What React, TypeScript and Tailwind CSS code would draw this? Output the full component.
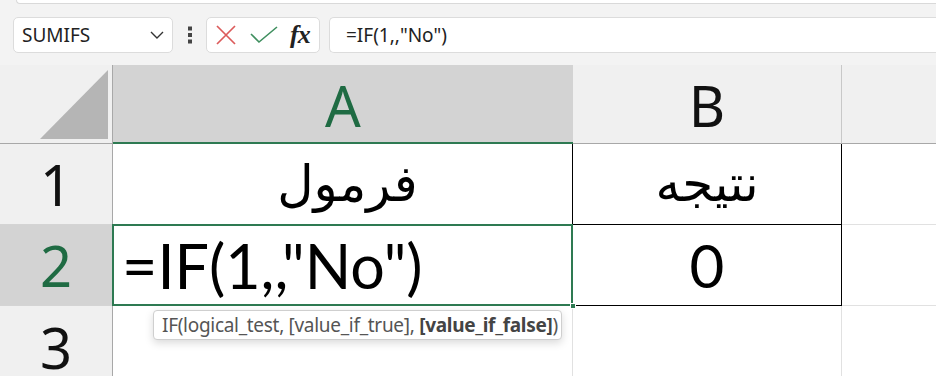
import React from "react";

export default function App() {
  return (
    <div className="w-[936px] h-[376px] bg-[#f3f3f3] overflow-hidden relative font-['Noto_Sans',sans-serif]">
      {/* top ribbon edge */}
      <div className="h-[4px] ml-[16px] bg-white border-b border-l border-[#d9d9d9] rounded-bl-[7px]" />

      {/* formula bar */}
      <div className="flex items-center h-[36px] mt-[13px]">
        <div className="ml-[13px] w-[160px] h-full bg-white border border-[#dcdcdc] rounded-[5px] flex items-center justify-between pl-[8px] pr-[7px]">
          <span className="text-[19px] text-[#222] leading-none">SUMIFS</span>
          <svg width="16" height="10" viewBox="0 0 16 10">
            <path d="M2 2 L8 8 L14 2" fill="none" stroke="#333" strokeWidth="1.4" />
          </svg>
        </div>
        <div className="w-[33px] flex justify-center">
          <svg width="6" height="18" viewBox="0 0 6 18">
            <rect x="1" y="0.5" width="4" height="4" fill="#444" />
            <rect x="1" y="7" width="4" height="4" fill="#444" />
            <rect x="1" y="13.5" width="4" height="4" fill="#444" />
          </svg>
        </div>
        <div className="w-[114px] h-full bg-white border border-[#dcdcdc] rounded-[5px] flex items-center pl-[8px]">
          <svg width="22" height="22" viewBox="0 0 22 22">
            <path d="M2 2 L20 20 M20 2 L2 20" stroke="#dc5b5b" strokeWidth="1.7" />
          </svg>
          <svg className="ml-[13px]" width="28" height="18" viewBox="0 0 28 18">
            <path d="M1 8 L9 16 L27 1" fill="none" stroke="#3f8f5f" strokeWidth="1.6" />
          </svg>
          <span className="ml-[12px] text-[26px] leading-none italic text-[#222] font-['Liberation_Serif',serif] font-bold tracking-[-1px]">
            fx
          </span>
        </div>
        <div className="ml-[9px] flex-1 h-full bg-white border border-r-0 border-[#dcdcdc] rounded-l-[5px] flex items-center pl-[16px]">
          <span className="text-[19px] text-[#222] leading-none">=IF(1,,"No")</span>
        </div>
      </div>

      {/* grid */}
      <div className="mt-[12px] grid grid-cols-[113px_460px_269px_1fr] grid-rows-[79px_81px_81px_1fr] h-[311px]">
        {/* header row */}
        <div className="bg-[#f0f0f0] border-r border-b border-[#a8a8a8]">
          <svg width="112" height="78" viewBox="0 0 112 78">
            <polygon points="108,5 108,74 40,74" fill="#b5b5b5" />
          </svg>
        </div>
        <div className="bg-[#d3d3d3] border-b-2 border-[#2e7a52] flex items-center justify-center">
          <span className="text-[56px] leading-none text-[#1f6b43] mt-[2px]">A</span>
        </div>
        <div className="bg-[#f0f0f0] border-r border-b border-r-[#c8c8c8] border-b-[#a8a8a8] flex items-center justify-center">
          <span className="text-[56px] leading-none text-[#111] mt-[2px]">B</span>
        </div>
        <div className="bg-[#f0f0f0] border-b border-[#a8a8a8]" />

        {/* row 1 */}
        <div className="bg-[#f0f0f0] border-r border-b border-r-[#a8a8a8] border-b-[#d4d4d4] flex items-center justify-center">
          <span className="text-[56px] leading-none text-[#111]">1</span>
        </div>
        <div className="bg-white border-r border-b border-r-black border-b-[#e1e1e1] flex items-center justify-center pl-[10px]">
          <span dir="rtl" className="text-[50px] leading-none text-black font-['DejaVu_Sans',sans-serif]">فرمول</span>
        </div>
        <div className="bg-white border-r border-b border-black flex items-center justify-center">
          <span dir="rtl" className="text-[50px] leading-none text-black font-['DejaVu_Sans',sans-serif]">نتیجه</span>
        </div>
        <div className="bg-white border-b border-[#e1e1e1]" />

        {/* row 2 */}
        <div className="bg-[#d3d3d3] border-r border-b border-r-[#a8a8a8] border-b-[#d4d4d4] flex items-center justify-center">
          <span className="text-[56px] leading-none text-[#1f6b43]">2</span>
        </div>
        <div className="bg-white border-r border-b border-[#e1e1e1] relative flex items-center pl-[9px]">
          <span className="text-[61px] leading-none text-black font-['Lato',sans-serif]">=IF(1,,"No")</span>
          <div className="absolute -left-[1px] -top-[1px] -right-[1px] -bottom-[1px] border-2 border-[#2e7a52]" />
          <div className="absolute -right-[4px] -bottom-[4px] w-[6px] h-[6px] bg-[#2e7a52] border border-white" />
        </div>
        <div className="bg-white border-r border-b border-black flex items-center justify-center">
          <span className="text-[60px] leading-none text-black font-['Lato',sans-serif]">0</span>
        </div>
        <div className="bg-white border-b border-[#e1e1e1]" />

        {/* row 3 */}
        <div className="bg-[#f0f0f0] border-r border-[#a8a8a8] flex items-start justify-center pt-[13px]">
          <span className="text-[56px] leading-none text-[#111]">3</span>
        </div>
        <div className="bg-white border-r border-[#e1e1e1]" />
        <div className="bg-white border-r border-[#e1e1e1]" />
        <div className="bg-white" />
      </div>

      {/* tooltip */}
      <div className="absolute left-[153px] top-[310px] w-[409px] h-[30px] bg-white border border-[#cfcfcf] rounded-[4px] shadow-[0_3px_8px_rgba(0,0,0,0.15)] flex items-center pl-[8px]">
        <span className="text-[19px] leading-none text-[#555] whitespace-nowrap tracking-[-0.3px]">
          IF(logical_test, [value_if_true], <b className="text-[#444]">[value_if_false]</b>)
        </span>
      </div>
    </div>
  );
}
